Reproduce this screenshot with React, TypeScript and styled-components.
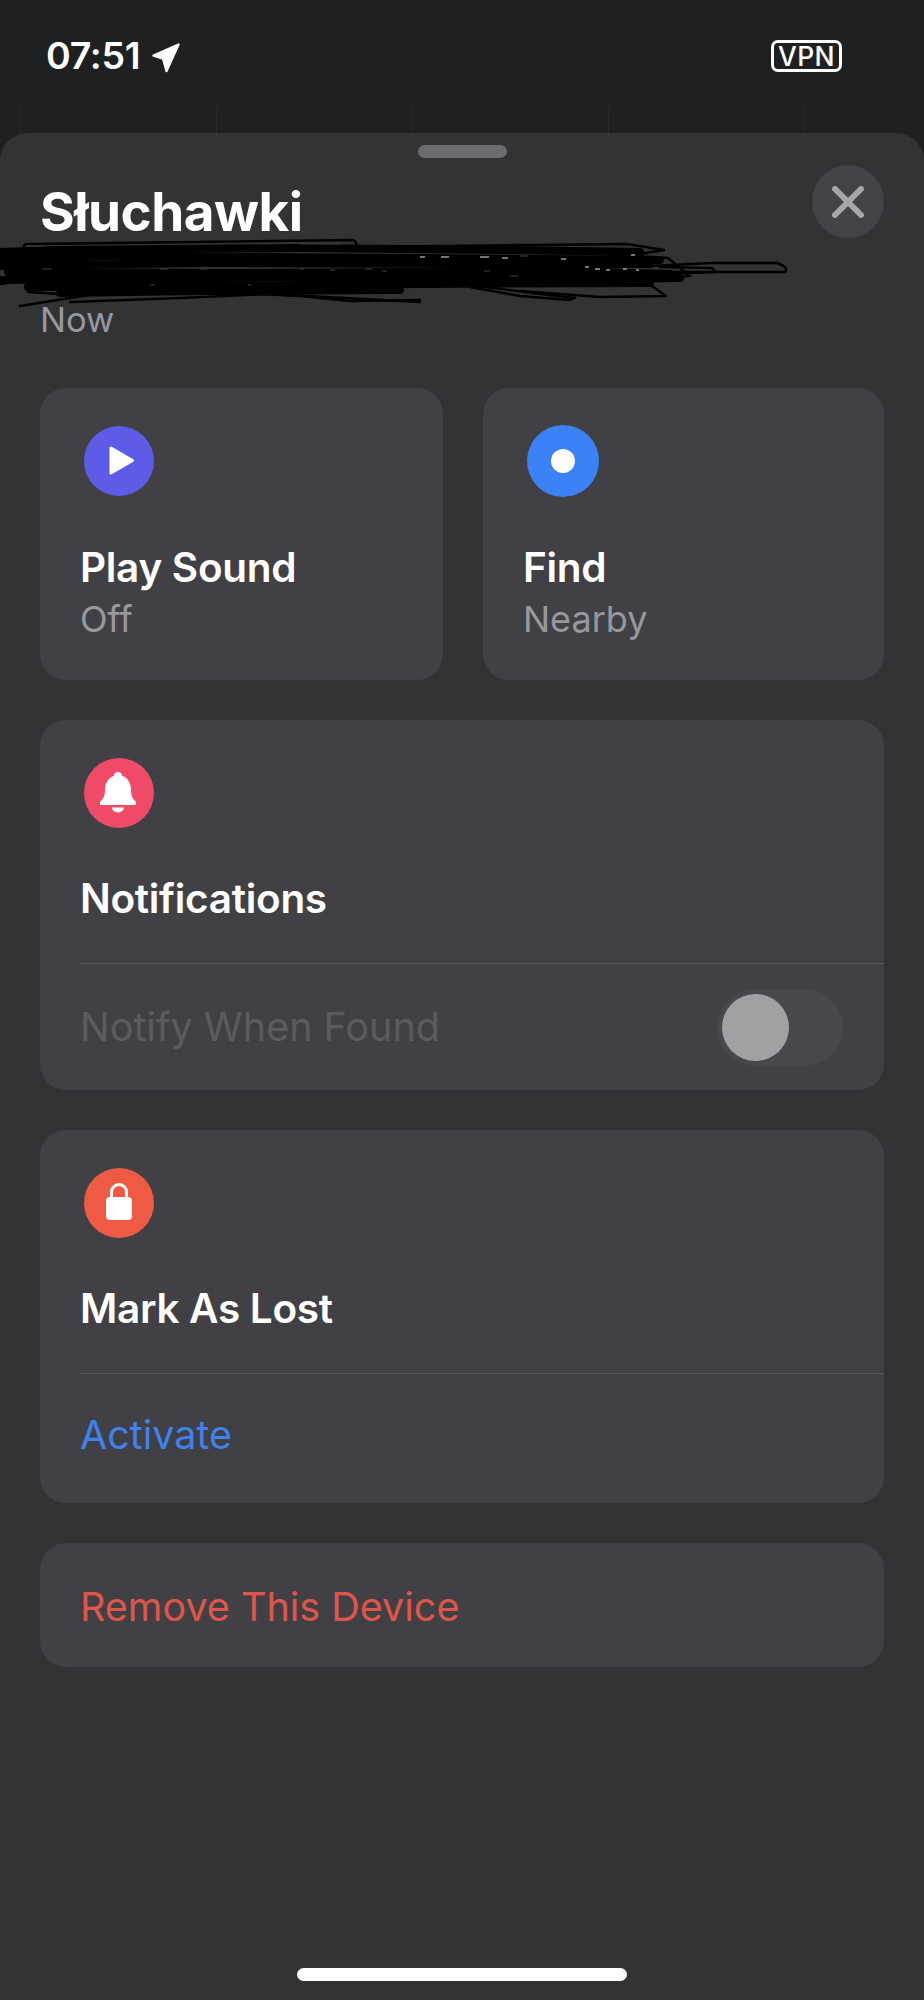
import React from 'react';
import styled, { createGlobalStyle } from 'styled-components';

const GlobalStyle = createGlobalStyle`
  html, body {
    margin: 0;
    padding: 0;
    background: #1f2022;
  }
  body {
    font-family: Inter, "Noto Sans", "Liberation Sans", sans-serif;
    -webkit-font-smoothing: antialiased;
  }
`;

const Screen = styled.div`
  width: 924px;
  height: 2000px;
  overflow: hidden;
  display: flex;
  flex-direction: column;
  background: #1f2022;
`;

const TopArea = styled.div`
  height: 133px;
  display: flex;
  flex-direction: column;
`;

const StatusBar = styled.div`
  height: 108px;
  box-sizing: border-box;
  padding: 40px 82px 0 46px;
  display: flex;
  align-items: flex-start;
  justify-content: space-between;
`;

const TimeGroup = styled.div`
  display: flex;
  align-items: flex-start;
  gap: 12px;
`;

const Time = styled.div`
  margin-top: -2px;
  color: #fff;
  font-size: 37.5px;
  font-weight: 600;
  line-height: 36px;
  letter-spacing: -0.3px;
`;

const LocationArrow = styled.svg`
  width: 28px;
  height: 30px;
  margin-top: 3px;
`;

const VpnBadge = styled.div`
  width: 71px;
  height: 32px;
  box-sizing: border-box;
  border: 3px solid #fff;
  border-radius: 7px;
  color: #fff;
  font-size: 26.5px;
  font-weight: 500;
  line-height: 26px;
  text-align: center;
  letter-spacing: 0.4px;
`;

const GhostRow = styled.div`
  flex: 1;
  display: flex;
  padding-left: 20px;
`;

const GhostCell = styled.div`
  flex: none;
  width: 196px;
  box-sizing: border-box;
  border-left: 1px solid #2a2b2d;
`;

const Sheet = styled.div`
  position: relative;
  flex: 1;
  display: flex;
  flex-direction: column;
  padding: 0 40px;
  border-radius: 28px 28px 0 0;
  background: #323335;
`;

const Grabber = styled.div`
  align-self: center;
  width: 89px;
  height: 13px;
  margin-top: 12px;
  border-radius: 7px;
  background: #6b6c71;
`;

const Header = styled.div`
  height: 223px;
  margin-top: 7px;
  display: flex;
  justify-content: space-between;
  align-items: flex-start;
`;

const HeaderText = styled.div`
  display: flex;
  flex-direction: column;
  padding-top: 17px;
`;

const Title = styled.div`
  color: #fff;
  font-size: 53px;
  font-weight: 700;
  line-height: 60px;
  letter-spacing: -0.5px;
`;

const Updated = styled.div`
  margin-top: 58px;
  color: #98989e;
  font-size: 34.5px;
  font-weight: 400;
  line-height: 40px;
`;

const CloseButton = styled.button`
  width: 72px;
  height: 73px;
  padding: 0;
  border: 0;
  border-radius: 50%;
  background: #434347;
  display: flex;
  align-items: center;
  justify-content: center;
`;

// covers the hand-scribbled redaction over the device's address line
const Scribble = styled.svg`
  position: absolute;
  top: 97px;
  left: 0;
  width: 800px;
  height: 90px;
  pointer-events: none;
`;

const Sections = styled.div`
  display: flex;
  flex-direction: column;
  gap: 40px;
`;

const TopCards = styled.div`
  display: grid;
  grid-template-columns: 403px 401px;
  gap: 40px;
`;

const Card = styled.section<{ $height: number }>`
  height: ${(p) => p.$height}px;
  box-sizing: border-box;
  border-radius: 26px;
  background: #414145;
  padding-left: 40px;
  overflow: hidden;
`;

const IconCircle = styled.div<{ $color: string; $size?: number }>`
  width: ${(p) => p.$size ?? 70}px;
  height: ${(p) => p.$size ?? 70}px;
  margin: ${(p) => (p.$size ? 37 : 38)}px 0 ${(p) => (p.$size ? -1 : 0)}px 4px;
  border-radius: 50%;
  background: ${(p) => p.$color};
  display: flex;
  align-items: center;
  justify-content: center;
`;

const Label = styled.div<{ $gap?: number }>`
  margin-top: ${(p) => p.$gap ?? 47}px;
  color: #fff;
  font-size: 40.5px;
  font-weight: 600;
  line-height: 50px;
  letter-spacing: -0.3px;
`;

const Sublabel = styled.div`
  margin-top: 4px;
  color: #98989e;
  font-size: 36px;
  line-height: 44px;
`;

const Divider = styled.div`
  height: 1px;
  margin: 39px 0 0 -1px;
  background: #58585d;
`;

const Row = styled.div<{ $height: number; $shift?: number }>`
  height: ${(p) => p.$height}px;
  box-sizing: border-box;
  padding-right: 41px;
  padding-bottom: ${(p) => p.$shift ?? 0}px;
  display: flex;
  align-items: center;
  justify-content: space-between;
`;

const RowText = styled.div<{ $color: string }>`
  color: ${(p) => p.$color};
  font-size: 39.5px;
  font-weight: 400;
  line-height: 44px;
`;

const ToggleTrack = styled.div`
  width: 126px;
  height: 77px;
  box-sizing: border-box;
  padding: 5px;
  border-radius: 39px;
  background: #48484c;
`;

const ToggleThumb = styled.div`
  width: 67px;
  height: 67px;
  border-radius: 50%;
  background: #a1a1a3;
`;

const HomeIndicator = styled.div`
  align-self: center;
  width: 330px;
  height: 13px;
  margin-top: auto;
  margin-bottom: 19px;
  border-radius: 7px;
  background: #fff;
`;

const ghostCount = 5;

// x, y, width of the specks of screen showing through the scribble
const brightSpecks: [number, number, number][] = [
  [420, 27, 5], [441, 27, 8], [480, 27, 9], [502, 28, 6], [561, 29, 5], [631, 25, 4],
  [585, 37, 4], [595, 39, 5], [606, 40, 4], [623, 39, 4], [636, 40, 3],
];

const dimSpecks: [number, number, number][] = [
  [42, 39, 10], [160, 39, 8], [200, 39, 7], [300, 39, 4], [330, 40, 5], [365, 39, 7],
  [382, 41, 5], [484, 41, 6], [150, 55, 5], [248, 55, 3], [510, 46, 8], [30, 16, 14],
  [300, 14, 40], [520, 26, 8],
];

const scribbleLines = [
  'M0 22 L60 20 L300 18 L500 20 L640 22',
  'M0 29 L120 26 L420 28 L660 30',
  'M0 36 L200 33 L520 34 L650 34',
  'M8 42 L240 43 L560 41 L670 44',
  'M0 50 L300 47 L600 49 L680 48',
  'M28 57 L180 56 L420 54 L650 53',
  'M60 63 L200 61 L400 60',
];

export default function App() {
  return (
    <>
      <GlobalStyle />
      <Screen>
        <TopArea>
          <StatusBar>
            <TimeGroup>
              <Time>07:51</Time>
              <LocationArrow viewBox="0 0 28 30">
                <path
                  d="M26.5 1.5 L1.5 12.5 L11 15.5 L14.5 28 Z"
                  fill="#fff"
                  stroke="#fff"
                  strokeWidth="2.4"
                  strokeLinejoin="round"
                />
              </LocationArrow>
            </TimeGroup>
            <VpnBadge>VPN</VpnBadge>
          </StatusBar>
          <GhostRow>
            {new Array(ghostCount).fill(0).map((_, idx) => (
              <GhostCell key={idx} />
            ))}
          </GhostRow>
        </TopArea>

        <Sheet>
          <Grabber />
          <Header>
            <HeaderText>
              <Title>Słuchawki</Title>
              <Updated>Now</Updated>
            </HeaderText>
            <CloseButton aria-label="Close">
              <svg width="32" height="32" viewBox="0 0 32 32">
                <path
                  d="M3 3 L29 29 M29 3 L3 29"
                  stroke="#a6a6ac"
                  strokeWidth="6"
                  strokeLinecap="round"
                />
              </svg>
            </CloseButton>
          </Header>

          <Scribble viewBox="0 0 800 90">
            <g fill="none" stroke="#000" strokeWidth="8" strokeLinecap="round" strokeLinejoin="round">
              {scribbleLines.map((d) => (
                <path key={d} d={d} />
              ))}
            </g>
            <g fill="none" stroke="#000" strokeWidth="2.4" strokeLinecap="round" strokeLinejoin="round">
              <path d="M24 18 Q22 13 32 14 L353 10 Q358 12 355 17 L627 14 L664 20 L640 24" />
              <path d="M600 24 L668 28 L690 46 L640 50" />
              <path d="M650 36 L712 33 L777 33 Q789 37 785 42 L640 42" />
              <path d="M660 37 L712 38 L716 42 L660 44" />
              <path d="M470 55 L540 64 L575 68 L570 70 L520 66 L470 57" />
              <path d="M652 56 L666 66 L600 67 L520 61" />
              <path d="M20 76 L95 64 L240 63 L300 66 L350 71 L420 70" />
              <path d="M70 72 L180 68 L270 64 L420 72" />
              <path d="M0 34 L30 28 M0 48 L30 44 M0 54 L40 48" />
              <path d="M27 52 L28 62 L60 64" />
            </g>
            {dimSpecks.map(([x, y, w]) => (
              <line key={`${x}-${y}`} x1={x} y1={y} x2={x + w} y2={y} stroke="#3a3a3c" strokeWidth="1.2" />
            ))}
            {brightSpecks.map(([x, y, w]) => (
              <line key={`${x}-${y}`} x1={x} y1={y} x2={x + w} y2={y} stroke="#a8a8ab" strokeWidth="1.4" />
            ))}
          </Scribble>

          <Sections>
            <TopCards>
              <Card $height={292}>
                <IconCircle $color="#5e5ce6">
                  <svg width="70" height="70" viewBox="0 0 70 70">
                    <path
                      d="M27 22 L48.5 34.5 L27 47 Z"
                      fill="#fff"
                      stroke="#fff"
                      strokeWidth="3"
                      strokeLinejoin="round"
                    />
                  </svg>
                </IconCircle>
                <Label>Play Sound</Label>
                <Sublabel>Off</Sublabel>
              </Card>
              <Card $height={292}>
                <IconCircle $color="#3a82f6" $size={72}>
                  <svg width="72" height="72" viewBox="0 0 72 72">
                    <circle cx="36" cy="36" r="12" fill="#fff" />
                  </svg>
                </IconCircle>
                <Label>Find</Label>
                <Sublabel>Nearby</Sublabel>
              </Card>
            </TopCards>

            <Card $height={370}>
              <IconCircle $color="#ef4a68">
                <svg width="70" height="70" viewBox="0 0 70 70">
                  <path
                    d="M34 14 c-2.4 0 -4 1.6 -4 3.8 C23.5 20 21 26 21 32 c0 6 -2 9 -5 12 v3 h36 v-3 c-3 -3 -5 -6 -5 -12 c0 -6 -2.5 -12 -9 -14.2 c0 -2.2 -1.6 -3.8 -4 -3.8 z"
                    fill="#fff"
                  />
                  <path d="M28 49.5 h12 a6 5 0 0 1 -12 0 z" fill="#fff" />
                </svg>
              </IconCircle>
              <Label $gap={46}>Notifications</Label>
              <Divider />
              <Row $height={126}>
                <RowText $color="#5b5b60">Notify When Found</RowText>
                <ToggleTrack>
                  <ToggleThumb />
                </ToggleTrack>
              </Row>
            </Card>

            <Card $height={373}>
              <IconCircle $color="#ef5a45">
                <svg width="70" height="70" viewBox="0 0 70 70">
                  <path
                    d="M27.5 30 v-6 a7.5 7.5 0 0 1 15 0 v6"
                    fill="none"
                    stroke="#fff"
                    strokeWidth="3"
                  />
                  <rect x="22" y="29" width="26" height="23" rx="4" fill="#fff" />
                </svg>
              </IconCircle>
              <Label $gap={46}>Mark As Lost</Label>
              <Divider />
              <Row $height={129} $shift={7}>
                <RowText $color="#3f82ee">Activate</RowText>
              </Row>
            </Card>

            <Card $height={124}>
              <Row $height={127}>
                <RowText $color="#e0554a">Remove This Device</RowText>
              </Row>
            </Card>
          </Sections>

          <HomeIndicator />
        </Sheet>
      </Screen>
    </>
  );
}
